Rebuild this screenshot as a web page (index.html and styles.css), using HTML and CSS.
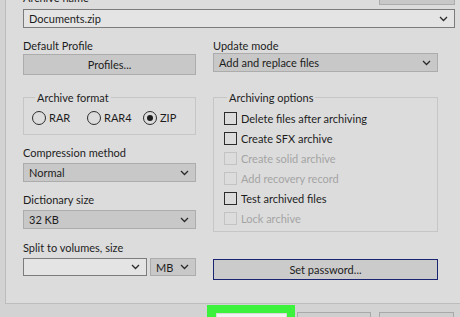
FILE: index.html
```html
<!DOCTYPE html>
<html lang="en">
<head>
  <meta charset="UTF-8">
  <title>Archive name and parameters</title>
  <link rel="stylesheet" href="styles.css">
</head>
<body>
  <div class="tab">
    <div class="top-row">
      <span class="label">Archive name</span>
      <button class="btn browse"></button>
    </div>
    <div class="field edit">
      <span>Documents.zip</span>
      <svg class="chev" width="9" height="6" viewBox="0 0 9 6"><path d="M1 1 L4.5 4.5 L8 1" fill="none" stroke="#2a2a2a" stroke-width="1.3"/></svg>
    </div>

    <div class="cols">
      <div class="col">
        <div class="label first">Default Profile</div>
        <button class="btn profiles">Profiles...</button>

        <fieldset class="group format">
          <legend>Archive format</legend>
          <div class="radios">
            <span class="radio"><span class="dot"></span>RAR</span>
            <span class="radio"><span class="dot"></span>RAR4</span>
            <span class="radio checked"><span class="dot"></span>ZIP</span>
          </div>
        </fieldset>

        <div class="label">Compression method</div>
        <div class="field select">
          <span>Normal</span>
          <svg class="chev" width="9" height="6" viewBox="0 0 9 6"><path d="M1 1 L4.5 4.5 L8 1" fill="none" stroke="#2a2a2a" stroke-width="1.3"/></svg>
        </div>

        <div class="label">Dictionary size</div>
        <div class="field select">
          <span>32 KB</span>
          <svg class="chev" width="9" height="6" viewBox="0 0 9 6"><path d="M1 1 L4.5 4.5 L8 1" fill="none" stroke="#2a2a2a" stroke-width="1.3"/></svg>
        </div>

        <div class="label split-label">Split to volumes, size</div>
        <div class="split-row">
          <div class="field edit volume">
            <span></span>
            <svg class="chev" width="9" height="6" viewBox="0 0 9 6"><path d="M1 1 L4.5 4.5 L8 1" fill="none" stroke="#2a2a2a" stroke-width="1.3"/></svg>
          </div>
          <div class="field select unit">
            <span>MB</span>
            <svg class="chev" width="9" height="6" viewBox="0 0 9 6"><path d="M1 1 L4.5 4.5 L8 1" fill="none" stroke="#2a2a2a" stroke-width="1.3"/></svg>
          </div>
        </div>
      </div>

      <div class="col">
        <div class="label first">Update mode</div>
        <div class="field select mode">
          <span>Add and replace files</span>
          <svg class="chev" width="9" height="6" viewBox="0 0 9 6"><path d="M1 1 L4.5 4.5 L8 1" fill="none" stroke="#2a2a2a" stroke-width="1.3"/></svg>
        </div>

        <fieldset class="group options">
          <legend>Archiving options</legend>
          <div class="check"><span class="box"></span>Delete files after archiving</div>
          <div class="check"><span class="box"></span>Create SFX archive</div>
          <div class="check disabled"><span class="box"></span>Create solid archive</div>
          <div class="check disabled"><span class="box"></span>Add recovery record</div>
          <div class="check"><span class="box"></span>Test archived files</div>
          <div class="check disabled"><span class="box"></span>Lock archive</div>
        </fieldset>

        <button class="btn password">Set password...</button>
      </div>
    </div>
  </div>

  <div class="actions">
    <div class="highlight"><button class="btn ok"></button></div>
    <button class="btn cancel"></button>
    <button class="btn help"></button>
  </div>
</body>
</html>
```

FILE: styles.css
```css
body {
  margin: 0;
  background: #d3d3d3;
  font-family: 'Lato', 'Noto Sans', sans-serif;
  font-size: 11px;
  line-height: 15px;
  color: #1c1c1c;
  height: 317px;
  overflow: hidden;
}

.tab {
  display: flow-root;
  margin-left: 5px;
  width: 432px;
  padding: 0 14px 24px 17px;
  background: #dcdcdc;
  border: 1px solid #bdbdbd;
  border-top: none;
  height: 279px;
}

.top-row {
  display: flex;
  justify-content: space-between;
  margin-top: -11px;
  height: 16px;
}

.top-row .label {
  margin: 0;
  padding-top: 1px;
}

.btn {
  font-family: inherit;
  font-size: 11px;
  color: #1c1c1c;
  background: #c8c8c8;
  border: 1px solid #acacac;
  padding: 0;
  margin: 0;
  box-sizing: border-box;
}

.browse {
  width: 76px;
  height: 16px;
}

.field {
  display: flex;
  align-items: center;
  justify-content: space-between;
  box-sizing: border-box;
  height: 19px;
  padding: 0 6px 0 5px;
}

.field.edit {
  background: #e4e4e4;
  border: 1px solid #7c7c7c;
}

.field.select {
  background: #c8c8c8;
  border: 1px solid #acacac;
}

.top-row + .field {
  margin-top: 4px;
}

.chev {
  flex-shrink: 0;
}

.cols {
  display: grid;
  grid-template-columns: 173px 225px;
  column-gap: 17px;
}

.col {
  display: flex;
  flex-direction: column;
}

.label {
  margin-top: 10px;
  margin-bottom: 3px;
}

.label.first {
  margin-top: 10px;
  margin-bottom: 1px;
}

.profiles {
  height: 21px;
}

.mode {
  margin-top: -1px;
}

.group {
  margin: 0;
  border: 1px solid #c6c6c6;
  min-width: 0;
}

.group legend {
  padding: 0 2px;
  margin-left: 3px;
}

.format {
  margin-top: 15px;
  padding: 5px 8px 9px 8px;
}

.radios {
  display: grid;
  grid-template-columns: 55px 56px auto;
}

.radio {
  display: flex;
  align-items: center;
  gap: 3px;
}

.dot {
  width: 14px;
  height: 14px;
  box-sizing: border-box;
  border: 1px solid #2c2c2c;
  border-radius: 50%;
  display: flex;
  align-items: center;
  justify-content: center;
}

.checked .dot::after {
  content: '';
  width: 6px;
  height: 6px;
  border-radius: 50%;
  background: #1c1c1c;
}

.format + .label {
  margin-top: 10px;
}

.split-label {
  margin-top: 11px;
}

.split-row {
  display: flex;
  gap: 3px;
}

.split-row .field {
  height: 18px;
}

.volume {
  width: 124px;
}

.unit {
  flex: 1;
}

.options {
  margin-top: 18px;
  padding: 3px 8px 3px 10px;
}

.check {
  display: flex;
  align-items: center;
  gap: 4px;
  height: 20px;
}

.box {
  width: 13px;
  height: 13px;
  box-sizing: border-box;
  border: 1px solid #2c2c2c;
}

.check.disabled {
  color: #a4a4a4;
}

.check.disabled .box {
  border-color: #c3c3c3;
}

.password {
  margin-top: 27px;
  height: 21px;
  background: #cbcbcb;
  border: 1px solid #1b2470;
}

.actions {
  display: flex;
  align-items: flex-start;
  margin-left: 207px;
  margin-top: 1px;
}

.highlight {
  width: 88px;
  height: 12px;
  box-sizing: border-box;
  padding: 8px 8px 0 9px;
  background: #3cf23c;
}

.ok {
  display: block;
  width: 71px;
  height: 4px;
  background: #f2f2f2;
  border-color: #d8d8d8;
  border-bottom: none;
}

.cancel {
  width: 74px;
  height: 5px;
  margin-top: 7px;
  margin-left: 2px;
  background: #cfcfcf;
  border-color: #a9a9a9;
  border-bottom: none;
}

.help {
  width: 75px;
  height: 5px;
  margin-top: 7px;
  margin-left: 8px;
  background: #cfcfcf;
  border-color: #a9a9a9;
  border-bottom: none;
}
```
